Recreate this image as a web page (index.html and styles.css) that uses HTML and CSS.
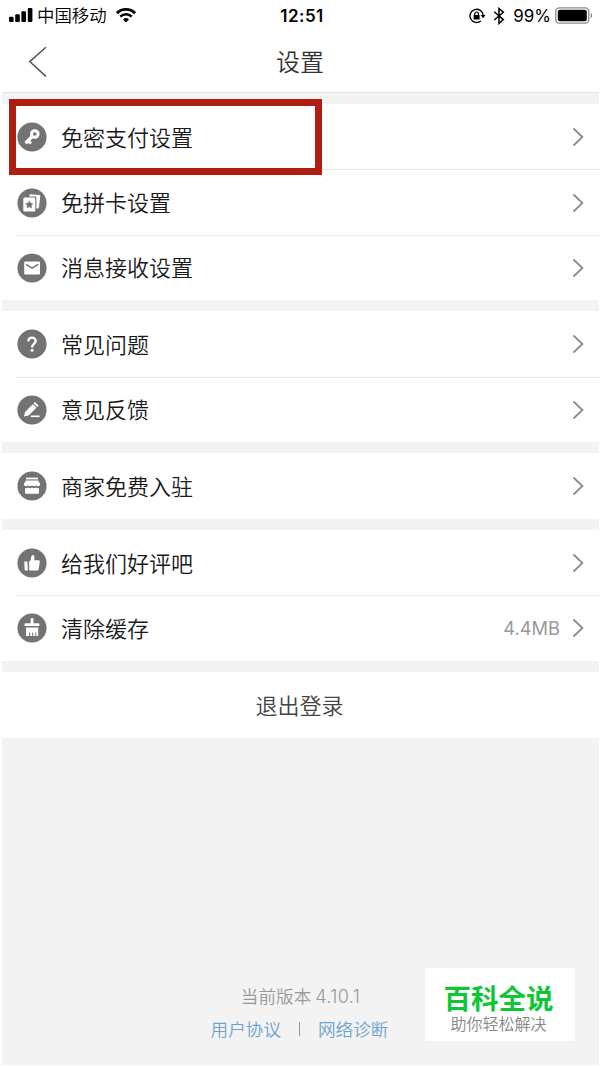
FILE: index.html
```html
<!DOCTYPE html>
<html lang="zh-CN">
<head>
  <meta charset="UTF-8">
  <title>设置</title>
  <link rel="stylesheet" href="styles.css">
</head>
<body>

  <!-- Shared arrow for the list rows -->
  <svg class="defs">
    <symbol id="arrow" viewBox="0 0 12 20">
      <path d="M1.5 1.5 L10.4 10 L1.5 18.5" fill="none" stroke="#8c8c8c" stroke-width="1.8"/>
    </symbol>
  </svg>

  <div class="page">
    <!-- Status bar -->
    <div class="status-bar">
      <div class="status-left">
        <svg class="signal" width="24" height="16" viewBox="0 0 24 16">
          <rect x="0" y="8.8" width="4.6" height="5.2" rx="1"/>
          <rect x="6.2" y="6.3" width="4.6" height="7.7" rx="1"/>
          <rect x="12.4" y="3.3" width="4.6" height="10.7" rx="1"/>
          <rect x="18.8" y="0" width="4.6" height="14" rx="1"/>
        </svg>
        <span class="carrier">中国移动</span>
        <svg class="wifi" width="20" height="15" viewBox="0 0 20 15">
          <path d="M.9 5.2 A12.8 12.8 0 0 1 19.1 5.2" fill="none" stroke="#000" stroke-width="2.8"/>
          <path d="M4.3 8.7 A8 8 0 0 1 15.7 8.7" fill="none" stroke="#000" stroke-width="2.6"/>
          <path d="M10 14.6 L7 11.5 A4.3 4.3 0 0 1 13 11.5 Z"/>
        </svg>
      </div>
      <div class="time">12:51</div>
      <div class="status-right">
        <svg class="lock" width="17" height="16" viewBox="0 0 17 16">
          <path d="M11.8 13 A6.6 6.6 0 1 1 14.2 7.2" fill="none" stroke="#000" stroke-width="1.4"/>
          <path d="M11.6 6.9 H16.6 L14.1 10.2 Z"/>
          <rect x="4.6" y="7" width="6" height="4.6" rx=".6"/>
          <path d="M5.8 7.2 V5.8 A1.8 1.8 0 0 1 9.4 5.8 V7.2" fill="none" stroke="#000" stroke-width="1.2"/>
        </svg>
        <svg class="bluetooth" width="12" height="18" viewBox="0 0 12 18">
          <path d="M1.2 4.8 L10.3 12.6 L6 16.5 V1.5 L10.3 5.2 L1.2 13" fill="none" stroke="#000" stroke-width="1.5"/>
        </svg>
        <span class="percent">99%</span>
        <svg class="battery" width="38" height="17" viewBox="0 0 38 17">
          <rect x=".8" y=".8" width="33" height="15.4" rx="3.6" fill="none" stroke="#8a8a8a" stroke-width="1.3"/>
          <rect x="2.8" y="2.8" width="29" height="11.4" rx="2"/>
          <path d="M35.6 5.8 C37.6 6.5 37.6 10.5 35.6 11.2 Z" fill="#8a8a8a"/>
        </svg>
      </div>
    </div>

    <!-- Title bar -->
    <div class="nav-bar">
      <svg class="back" width="20" height="32" viewBox="0 0 20 32">
        <path d="M18.9 1.2 L2.8 15.6 L18.9 30.4" fill="none" stroke="#555" stroke-width="1.5"/>
      </svg>
      <h1 class="title">设置</h1>
    </div>

    <div class="content">
      <!-- Payment and messages -->
      <div class="group">
        <div class="row">
          <svg class="icon" viewBox="0 0 30 30">
            <circle cx="15" cy="15" r="14.6" fill="#737373"/>
            <circle cx="17.8" cy="12" r="3.3" fill="none" stroke="#fff" stroke-width="3"/>
            <path d="M15.2 14.5 L8.6 21.2" stroke="#fff" stroke-width="3.4"/>
            <path d="M10.8 18.2 L14 21.4" stroke="#fff" stroke-width="2.8"/>
          </svg>
          <span class="label">免密支付设置</span>
          <svg class="arrow"><use href="#arrow"/></svg>
          <div class="highlight"></div>
        </div>
        <div class="row">
          <svg class="icon" viewBox="0 0 30 30">
            <circle cx="15" cy="15" r="14.6" fill="#737373"/>
            <path d="M13.5 6.2 L22.2 6.9 Q23.4 7.1 23.3 8.1 L21.9 19.8 Q21.7 20.7 20.5 20.6 L19.4 20.5 V9.8 Q19.4 8.5 18.2 8.5 H12.3 Q12.3 6.2 13.5 6.2Z" fill="#fff"/>
            <rect x="6.3" y="9.6" width="12" height="14" rx="1.4" fill="#fff"/>
            <path d="M12.3 12.4 L13.6 15.1 L16.5 15.4 L14.4 17.4 L15 20.3 L12.3 18.9 L9.6 20.3 L10.2 17.4 L8.1 15.4 L11 15.1Z" fill="#737373"/>
          </svg>
          <span class="label">免拼卡设置</span>
          <svg class="arrow"><use href="#arrow"/></svg>
        </div>
        <div class="row">
          <svg class="icon" viewBox="0 0 30 30">
            <circle cx="15" cy="15" r="14.6" fill="#737373"/>
            <rect x="7.2" y="8.6" width="15.8" height="12.8" rx="1.2" fill="#fff"/>
            <path d="M9 11.4 L15.1 15.2 L21.2 11.4" fill="none" stroke="#737373" stroke-width="1.5"/>
          </svg>
          <span class="label">消息接收设置</span>
          <svg class="arrow"><use href="#arrow"/></svg>
        </div>
      </div>

      <!-- Help -->
      <div class="group">
        <div class="row">
          <svg class="icon" viewBox="0 0 30 30">
            <circle cx="15" cy="15" r="14.6" fill="#737373"/>
            <path d="M11.4 12.4 C11.4 7.4 18.7 7.7 18.7 12 C18.7 14.7 15.1 14.7 15.1 18.4" fill="none" stroke="#fff" stroke-width="2.3"/>
            <circle cx="15.1" cy="21.3" r="1.5" fill="#fff"/>
          </svg>
          <span class="label">常见问题</span>
          <svg class="arrow"><use href="#arrow"/></svg>
        </div>
        <div class="row">
          <svg class="icon" viewBox="0 0 30 30">
            <circle cx="15" cy="15" r="14.6" fill="#737373"/>
            <path d="M7 21.6 L8 17 L15.8 9.2 L19.4 12.8 L11.6 20.6Z M16.6 8.4 L18 7 L21.6 10.6 L20.2 12Z" fill="#fff"/>
            <path d="M13.8 21.3 H22.5" stroke="#fff" stroke-width="1.6"/>
          </svg>
          <span class="label">意见反馈</span>
          <svg class="arrow"><use href="#arrow"/></svg>
        </div>
      </div>

      <!-- Merchants -->
      <div class="group">
        <div class="row">
          <svg class="icon" viewBox="0 0 30 30">
            <circle cx="15" cy="15" r="14.6" fill="#737373"/>
            <path d="M9 6.6 H21 V8.4 H9Z" fill="#fff"/>
            <path d="M8.8 9.6 H21.2 L23.2 13.2 Q23.2 15.3 21 15.3 Q19.6 15.3 19 14.2 Q18.2 15.3 17 15.3 Q15.7 15.3 15 14.2 Q14.3 15.3 13 15.3 Q11.8 15.3 11 14.2 Q10.4 15.3 9 15.3 Q6.8 15.3 6.8 13.2Z" fill="#fff"/>
            <path d="M8 17.3 Q10 17.5 11.2 16.5 Q13 18 15 16.5 Q17 18 18.8 16.5 Q20 17.5 22 17.3 V21.8 Q22 22.8 21 22.8 H9 Q8 22.8 8 21.8Z" fill="#fff"/>
          </svg>
          <span class="label">商家免费入驻</span>
          <svg class="arrow"><use href="#arrow"/></svg>
        </div>
      </div>

      <!-- App -->
      <div class="group">
        <div class="row">
          <svg class="icon" viewBox="0 0 30 30">
            <circle cx="15" cy="15" r="14.6" fill="#737373"/>
            <path d="M7.3 13.5 H10.4 L10.9 22.5 H8.6 Q7.7 22.5 7.6 21.6Z" fill="#fff"/>
            <path d="M12 14 Q14.5 12 14.3 8.5 Q14.4 7 15.9 7 Q17.5 7.2 17.5 9 L17.2 12.3 H21.8 Q23 12.4 22.8 13.7 L21.7 21.3 Q21.4 22.5 20.3 22.5 H12.3Z" fill="#fff"/>
          </svg>
          <span class="label">给我们好评吧</span>
          <svg class="arrow"><use href="#arrow"/></svg>
        </div>
        <div class="row">
          <svg class="icon" viewBox="0 0 30 30">
            <circle cx="15" cy="15" r="14.6" fill="#737373"/>
            <path d="M13.7 5.6 Q15.1 4.5 16.5 5.6 V10.3 H21.6 Q22.4 10.3 22.4 11.1 V13.1 H7.6 V11.1 Q7.6 10.3 8.4 10.3 H13.7Z" fill="#fff"/>
            <path d="M9 14.6 H21.2 V23 H19.3 V19.4 H18.3 V23 H16.2 V19.4 H15.2 V23 H13.1 V19.4 H12.1 V23 H9Z" fill="#fff"/>
          </svg>
          <span class="label">清除缓存</span>
          <span class="value">4.4MB</span>
          <svg class="arrow"><use href="#arrow"/></svg>
        </div>
      </div>

      <div class="logout">退出登录</div>

      <!-- Footer -->
      <div class="footer">
        <p class="version">当前版本 <span class="number">4.10.1</span></p>
        <div class="links">
          <a class="link">用户协议</a>
          <span class="divider"></span>
          <a class="link">网络诊断</a>
        </div>
      </div>
    </div>
  </div>

  <!-- Watermark -->
  <div class="watermark">
    <div class="brand">百科全说</div>
    <div class="slogan">助你轻松解决</div>
  </div>

</body>
</html>
```
FILE: styles.css
```css
* {
  box-sizing: border-box;
}

body {
  margin: 0;
  background: #fff;
  color: #1a1a1a;
  font-family: "Noto Sans CJK SC DemiLight", "Noto Sans CJK SC", sans-serif;
  font-weight: 350;
}

.defs {
  display: none;
}

.page {
  width: 600px;
  height: 1066px;
  padding: 0 1px 1px 2px;
  display: flex;
  flex-direction: column;
}

/* Status bar */
.status-bar {
  height: 31px;
  padding: 0 6px 0 7px;
  display: grid;
  grid-template-columns: 1fr auto 1fr;
  align-items: center;
  color: #000;
}

.status-left,
.status-right {
  display: flex;
  align-items: center;
}

.status-right {
  justify-content: flex-end;
}

.carrier {
  margin-left: 4px;
  font-size: 17.4px;
  line-height: 28px;
  padding-bottom: 1px;
}

.wifi {
  margin-left: 9px;
}

.time {
  padding-left: 2px;
  font-family: Inter, sans-serif;
  font-size: 17px;
  font-weight: 600;
  letter-spacing: 0.5px;
}

.bluetooth {
  margin-left: 7px;
}

.percent {
  margin: 0 4px 0 8px;
  font-family: Inter, sans-serif;
  font-size: 17px;
  font-weight: 400;
}

/* Title bar */
.nav-bar {
  height: 62px;
  padding: 0 26px 0 25px;
  display: grid;
  grid-template-columns: 1fr auto 1fr;
  align-items: center;
  border-bottom: 1px solid #e4e4e4;
}

.title {
  margin: 0;
  padding-bottom: 2px;
  font-size: 24px;
  font-weight: 350;
  line-height: 34px;
  color: #333;
}

/* List */
.content {
  flex: 1;
  padding-top: 11.4px;
  display: flex;
  flex-direction: column;
  gap: 11.8px;
  background: #f3f3f3;
}

.group {
  padding-left: 15px;
  background: #fff;
}

.row {
  position: relative;
  height: 65.1px;
  padding-right: 15px;
  display: flex;
  align-items: center;
}

.row + .row {
  border-top: 1px solid #e8e8e8;
}

.icon {
  width: 30px;
  height: 30px;
  margin-right: 14px;
}

.label {
  flex: 1;
  padding-bottom: 2.4px;
  font-size: 22px;
  line-height: 32px;
}

.value {
  margin-right: 12px;
  font-family: Inter, sans-serif;
  font-size: 18.3px;
  font-weight: 400;
  color: #999;
}

.arrow {
  width: 12px;
  height: 20px;
}

.highlight {
  position: absolute;
  left: -8px;
  top: -5.4px;
  width: 313px;
  height: 76px;
  border: 7px solid #b11c13;
  z-index: 1;
}

.logout {
  height: 66px;
  padding-right: 2px;
  background: #fff;
  color: #444;
  font-size: 22px;
  line-height: 64px;
  text-align: center;
}

/* Footer */
.footer {
  margin-top: auto;
  padding: 0 2px 22px 0;
  font-size: 17.6px;
  line-height: 28px;
  text-align: center;
}

.version {
  margin: 0 0 4px;
  padding-left: 2px;
  color: #999;
}

.number {
  font-family: Inter, sans-serif;
  font-size: 18px;
  letter-spacing: 0.4px;
}

.links {
  display: flex;
  justify-content: center;
  align-items: center;
}

.link {
  color: #6da3cd;
}

.divider {
  width: 1px;
  height: 14px;
  margin: 0 18px;
  background: #999;
}

/* Watermark */
.watermark {
  position: absolute;
  left: 425px;
  top: 968px;
  width: 150px;
  height: 73px;
  padding: 13px 3px 0 0;
  background: #fff;
  text-align: center;
}

.brand {
  font-family: "Noto Sans CJK SC", sans-serif;
  font-size: 27.5px;
  font-weight: 700;
  line-height: 32px;
  color: #0fc636;
}

.slogan {
  font-size: 16px;
  line-height: 20px;
  color: #888;
}
```
